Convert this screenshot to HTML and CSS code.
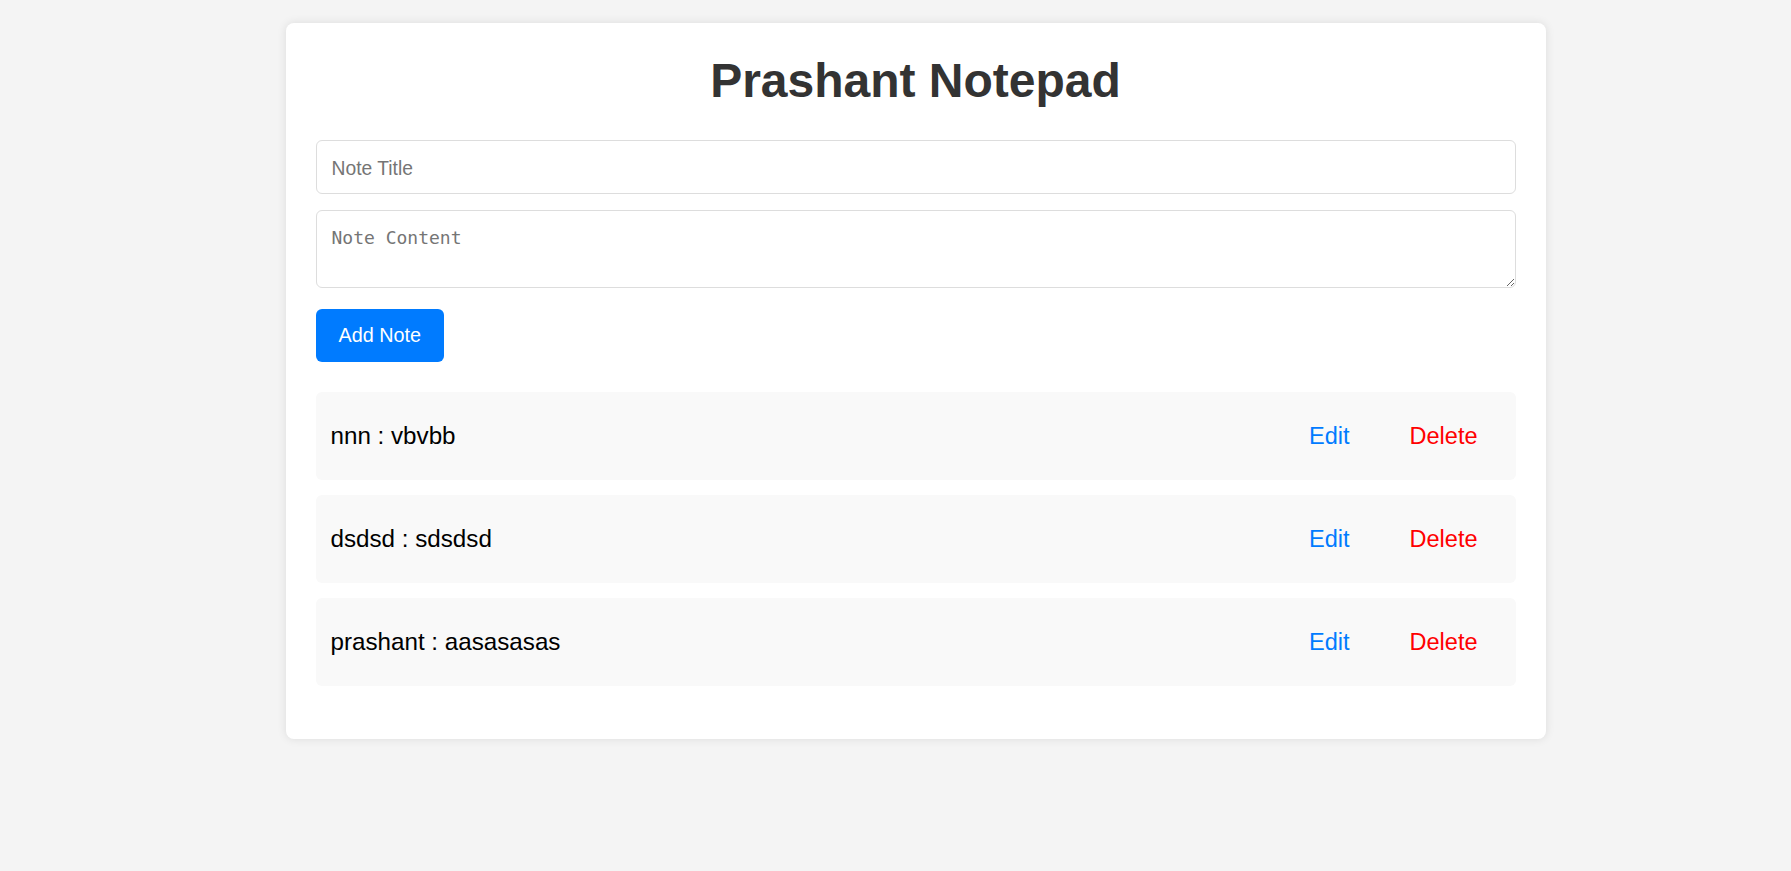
FILE: index.html
```html
<!DOCTYPE html>
<html lang="en">
<head>
<meta charset="UTF-8">
<title>Prashant Notepad</title>
<link rel="stylesheet" href="styles.css">
</head>
<body>
  <div class="card">
    <h1 class="title">Prashant Notepad</h1>
    <input class="field title-input" type="text" placeholder="Note Title">
    <textarea class="field content-input" placeholder="Note Content"></textarea>
    <button class="add-btn">Add Note</button>
    <ul class="notes">
      <li class="note">
        <span class="note-text">nnn : vbvbb</span>
        <div class="actions">
          <button class="act edit">Edit</button>
          <button class="act delete">Delete</button>
        </div>
      </li>
      <li class="note">
        <span class="note-text">dsdsd : sdsdsd</span>
        <div class="actions">
          <button class="act edit">Edit</button>
          <button class="act delete">Delete</button>
        </div>
      </li>
      <li class="note">
        <span class="note-text">prashant : aasasasas</span>
        <div class="actions">
          <button class="act edit">Edit</button>
          <button class="act delete">Delete</button>
        </div>
      </li>
    </ul>
  </div>
</body>
</html>
```

FILE: styles.css
```css
html, body {
  margin: 0;
  padding: 0;
}
body {
  background: #f4f4f4;
  font-family: "Liberation Sans", Arial, sans-serif;
  padding: 23px 0 0 40px;
  min-height: 100vh;
  box-sizing: border-box;
}
.card {
  width: 1260px;
  box-sizing: border-box;
  margin: 0 auto;
  background: #fff;
  border-radius: 8px;
  box-shadow: 0 0 10px rgba(0, 0, 0, 0.1);
  padding: 30px 30px 53px;
}
.title {
  margin: 0 0 32px;
  text-align: center;
  font-size: 48px;
  font-weight: bold;
  color: #333;
  line-height: 55px;
}
.field {
  display: block;
  width: 100%;
  box-sizing: border-box;
  border: 1px solid #ddd;
  border-radius: 6px;
  padding: 15px;
  background: #fff;
  outline: none;
}
.title-input {
  height: 54px;
  font-family: "Liberation Sans", Arial, sans-serif;
  font-size: 19.3px;
  padding-top: 17px;
  padding-bottom: 13px;
  margin-bottom: 16px;
}
.title-input::placeholder { color: #757575; }
.content-input {
  height: 78px;
  font-family: "DejaVu Sans Mono", monospace;
  font-size: 18px;
  padding-top: 16px;
  margin-bottom: 21px;
  resize: both;
}
.content-input::placeholder { color: #757575; }
.add-btn {
  display: block;
  height: 53px;
  padding: 0 23px;
  border: none;
  border-radius: 6px;
  background: #007bff;
  color: #fff;
  font-family: "Liberation Sans", Arial, sans-serif;
  font-size: 19.8px;
  cursor: pointer;
}
.notes {
  list-style: none;
  margin: 30px 0 0;
  padding: 0;
  display: flex;
  flex-direction: column;
  gap: 15px;
}
.note {
  display: flex;
  align-items: center;
  justify-content: space-between;
  height: 88px;
  box-sizing: border-box;
  padding: 0 18px 0 15px;
  background: #f9f9f9;
  border-radius: 6px;
}
.note-text {
  font-size: 24.2px;
  color: #000;
}
.actions {
  display: flex;
  gap: 20px;
}
.act {
  background: none;
  border: none;
  padding: 10px 20px;
  font-family: "Liberation Sans", Arial, sans-serif;
  font-size: 23.5px;
  cursor: pointer;
}
.edit { color: #007bff; }
.delete { color: #ff0000; }
```
